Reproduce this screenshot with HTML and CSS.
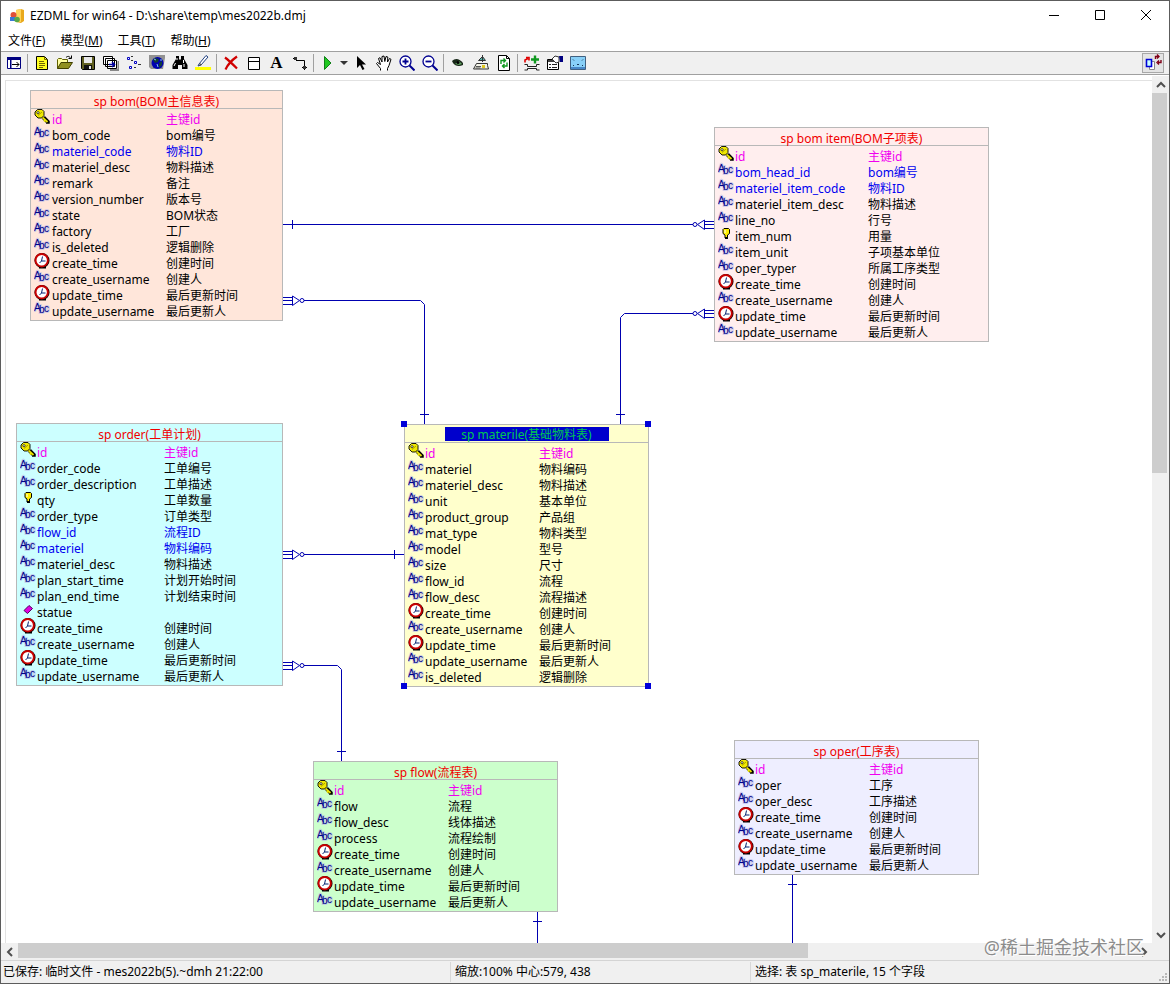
FILE: index.html
```html
<!DOCTYPE html>
<html lang="zh-CN">
<head>
<meta charset="utf-8">
<title>EZDML for win64</title>
<link rel="stylesheet" href="styles.css">
</head>
<body>
<svg class="defs" aria-hidden="true">
  <symbol id="key" viewBox="0 0 16 16">
    <path d="M8.500 8.500L13 13M10 8l4.500 4.500v1h-2.500" stroke="#000" stroke-width="2.500" fill="none"/>
    <path d="M8 8l5.500 5M11 11.500l-1 1" stroke="#e8e000" stroke-width="1.800" fill="none"/>
    <path d="M3.500 .5h4.500l2 2v4l-2.500 2.500H4L1 6V3z" fill="#f0e800" stroke="#000" stroke-width=".9"/>
    <path d="M4 6.500l4-3.500" stroke="#a09800" stroke-width=".9"/>
    <circle cx="4" cy="3.700" r="1.100" fill="#fff" stroke="#000" stroke-width=".7"/>
  </symbol>
  <symbol id="abc" viewBox="0 0 16 16" overflow="visible">
    <g class="abc-halo"><text x="0" y="10">A</text><text x="5" y="12">b</text><text x="10" y="11">c</text></g>
    <g class="abc-ink"><text x="0" y="10">A</text><text x="5" y="12">b</text><text x="10" y="11">c</text></g>
  </symbol>
  <symbol id="clock" viewBox="0 0 16 16">
    <path d="M5 14.500h7" stroke="#000" stroke-width="2"/>
    <circle cx="8" cy="7.500" r="6.800" fill="#fff" stroke="#000" stroke-width="1.500"/>
    <circle cx="7.700" cy="7.200" r="6.200" fill="#fff" stroke="#c80000" stroke-width="2"/>
    <path d="M8.500 3.500L7.500 8h4M7.500 8l-2 2" stroke="#002070" fill="none"/>
  </symbol>
  <symbol id="bulb" viewBox="0 0 16 16">
    <path d="M6 2.500h4.500l1 1v4l-2 1.500v3h-2.500v-3L5 7.500v-4z" fill="#ffee00" stroke="#000"/>
    <path d="M7 4v3" stroke="#fff"/><path d="M7 12h3" stroke="#000" stroke-width="2"/>
  </symbol>
  <symbol id="diamond" viewBox="0 0 16 16">
    <path d="M9 3.500l3.500 3-5 5-3.500-3z" fill="#e000e0" stroke="#500060"/>
  </symbol>
  <symbol id="foot" viewBox="0 0 22 10" overflow="visible">
    <path d="M0 1.500h9M0 4.500h9M0 8.500h9M9.500 0v9.500l7-5zM21 4.500h1"/><circle cx="19" cy="4.500" r="2"/>
  </symbol>
</svg>

<div class="window">
  <header class="titlebar">
    <svg class="app-icon" viewBox="0 0 16 16" aria-hidden="true"><path d="M7 2l5-1 3 1v11l-3 2-5-1z" fill="#e9a91c"/><path d="M7 2l5-1v13l-5-1z" fill="#ffd55c"/><circle cx="4.500" cy="7" r="3" fill="#e05038"/><rect x="1" y="9" width="5" height="4" fill="#3a78d8"/><circle cx="8" cy="11.500" r="2.800" fill="#58a848"/></svg>
    <h1 class="caption">EZDML for win64 - D:\share\temp\mes2022b.dmj</h1>
    <button class="win-btn" aria-label="最小化"><svg viewBox="0 0 12 12"><path d="M1 5.500h10"/></svg></button>
    <button class="win-btn" aria-label="最大化"><svg viewBox="0 0 12 12"><path d="M1.500 .5h9v9h-9z"/></svg></button>
    <button class="win-btn" aria-label="关闭"><svg viewBox="0 0 12 12"><path d="M1 0l10 10M11 0L1 10"/></svg></button>
  </header>

  <nav class="menubar">
    <button>文件(<u>F</u>)</button><button>模型(<u>M</u>)</button><button>工具(<u>T</u>)</button><button>帮助(<u>H</u>)</button>
  </nav>

  <div class="toolbar" role="toolbar">
    <button class="tool" aria-label="侧栏"><svg viewBox="0 0 16 16"><path d="M1.500 2.500h13v11h-13z" fill="#fff" stroke="#000080"/><path d="M1 2h14v3H1zM4 5h1.500v9H4z" fill="#000080"/><path d="M6 9.500h7M10.500 7l2.500 2.500L10.500 12" stroke="#000" fill="none"/></svg></button>
    <span class="sep"></span>
    <button class="tool" aria-label="新建"><svg viewBox="0 0 16 16"><path d="M2.500 1.500h8l3 3v10h-11z" fill="#ffff20" stroke="#000"/><path d="M10.500 1.500v3h3M5 6.500h5M5 8.500h6M5 10.500h6M5 12.500h4" stroke="#706800" fill="none"/></svg></button>
    <button class="tool" aria-label="打开"><svg viewBox="0 0 16 16"><path d="M.5 13.500v-9l1-1h3l1 1h5v3" fill="#ffffa0" stroke="#606000"/><path d="M.5 13.500l3.500-6h11.500l-4 6z" fill="#909020" stroke="#404000"/><path d="M9 2.500c2-2 4-1 4.500 1M11.500 3.500h3v-3" stroke="#000" fill="none"/></svg></button>
    <button class="tool" aria-label="保存"><svg viewBox="0 0 16 16"><path d="M1.500 1.500h13v13h-12l-1-1z" fill="#606020" stroke="#000"/><path d="M4 2h8v6H4z" fill="#e8e8e8"/><path d="M4 10h8v4H4z" fill="#111"/><path d="M9 11h2v3H9z" fill="#e8e8e8"/></svg></button>
    <button class="tool" aria-label="全部复制"><svg viewBox="0 0 16 16"><path d="M7 15h8.500V6" stroke="#888" stroke-width="2" fill="none"/><path d="M.5 1.500h9v8h-9zM2.500 3.500h9v8h-9zM4.500 5.500h9v8h-9z" fill="#fff" stroke="#000"/><path d="M6 9.500h6M9 7l2.500 2.500L9 12" stroke="#0000a0" stroke-width="1.500" fill="none"/></svg></button>
    <button class="tool" aria-label="关系"><svg viewBox="0 0 16 16"><path d="M1.500 2.500h2v2h-2zM8.500 6.500h2v2h-2zM3.500 11.500h2v2h-2z" fill="#fff" stroke="#0000c0"/><path d="M5 1.500h2M12 9.500h3M8 12.500h2M5 5.500h2" stroke="#333"/></svg></button>
    <button class="tool" aria-label="全局"><svg viewBox="0 0 16 16"><path d="M0 0h16v3l-2 11H2L0 12z" fill="#929292"/><circle cx="8.500" cy="8" r="6" fill="#0000b0"/><path d="M6 3l4 1-1 3-3 1-2-3zM10 8l3-2v4l-3 3z" fill="#103c38"/><path d="M5 4l2 1M11 5h2M8 9l1 3" stroke="#80c8e0"/></svg></button>
    <button class="tool" aria-label="查找"><svg viewBox="0 0 16 16"><path d="M4 1h3v3l1 1 1-1V1h3v3l3.500 6v4H10v-4H6v4H.5v-4L4 4z" fill="#000"/><path d="M3.500 8L2 11M11.500 5v3M5 3v2M12 9v3" stroke="#fff"/></svg></button>
    <button class="tool" aria-label="高亮"><svg viewBox="0 0 16 16"><path d="M0 12h16v3H0z" fill="#ffff00"/><path d="M4 9l7-8.500 2 1.500-7 8-3 1z" fill="#fff" stroke="#204080"/><path d="M4 11l1-3 2 2z" fill="#555"/></svg></button>
    <span class="sep"></span>
    <button class="tool" aria-label="删除"><svg viewBox="0 0 16 16"><path d="M2 2.500c4 3 8 7 12 11M14 1.500C9 5 5 9 2.500 14.500" stroke="#d00000" stroke-width="2.200" fill="none"/></svg></button>
    <button class="tool" aria-label="表"><svg viewBox="0 0 16 16"><path d="M2.500 2.500h11v12h-11zM2.500 6.500h11" fill="#fff" stroke="#000"/></svg></button>
    <button class="tool tool-text" aria-label="文本">A</button>
    <button class="tool" aria-label="连线"><svg viewBox="0 0 16 16"><path d="M1 3.500h3M4 5.500h8.500V12M10 12.500h5M12.500 15v-3" stroke="#000" fill="none"/><path d="M2 2h3v3H2zM11 11h3v3h-3z" fill="#333"/></svg></button>
    <span class="sep"></span>
    <button class="tool" aria-label="运行"><svg viewBox="0 0 16 16"><path d="M4.500 1.500l6.500 6.500-6.500 6.500z" fill="#20c820" stroke="#108018"/></svg></button>
    <button class="tool tool-drop" aria-label="运行选项"><svg viewBox="0 0 8 16"><path d="M0 6h8l-4 4z" fill="#333"/></svg></button>
    <button class="tool" aria-label="选择"><svg viewBox="0 0 16 16"><path d="M4 1v12l3-3 2.500 5 2-1L9 9.500h4z" fill="#000"/></svg></button>
    <button class="tool" aria-label="移动"><svg viewBox="0 0 16 16"><path d="M4.500 15.500v-2L.5 8.500l1-1 3 2-2-6 1.500-.8 2 4.300V1.500l2-.5.8 5.500L10 1.500l1.800.5-.3 5 2-3.500 1.500.8-2 6.200-1.500 3v2" fill="#fff" stroke="#000"/></svg></button>
    <button class="tool" aria-label="放大"><svg viewBox="0 0 16 16"><circle cx="6.500" cy="6.500" r="5.500" fill="#fff" stroke="#000090" stroke-width="1.300"/><path d="M10.500 10.500l5 5" stroke="#000090" stroke-width="2"/><path d="M3.500 6.500h6M6.500 3.500v6" stroke="#000090" stroke-width="1.800"/></svg></button>
    <button class="tool" aria-label="缩小"><svg viewBox="0 0 16 16"><circle cx="6.500" cy="6.500" r="5.500" fill="#fff" stroke="#000090" stroke-width="1.300"/><path d="M10.500 10.500l5 5" stroke="#000090" stroke-width="2"/><path d="M3.500 6.500h6" stroke="#000090" stroke-width="1.800"/></svg></button>
    <span class="sep"></span>
    <button class="tool" aria-label="预览"><svg viewBox="0 0 16 16"><path d="M2 6c3-3 7-3 11 2v2c-4 2-8 1-10-2z" fill="#182818"/><path d="M5 9l4-3 3 3-3 1z" fill="#60a060"/><circle cx="8" cy="7.500" r="1.500" fill="#000"/></svg></button>
    <button class="tool" aria-label="生成"><svg viewBox="0 0 16 16"><path d="M5.500 5.500l4-4 3 4z" fill="#50b0a8" stroke="#333"/><path d="M9.500 0v7" stroke="#333"/><path d="M3.500 8.500h11v2l1 3.500H.5z" fill="#f4f4e8" stroke="#333"/><path d="M3 11.500h5M2.500 13h5" stroke="#555"/><path d="M9 10h3v3H9z" fill="#e0c820"/></svg></button>
    <button class="tool" aria-label="刷新"><svg viewBox="0 0 16 16"><path d="M2.500.5h8l3 3v12h-11z" fill="#fff" stroke="#000"/><path d="M10.500.5v3h3" fill="none" stroke="#000"/><path d="M5 9V5.500h4M7.500 3.500l2 2-2 2M11 7.500V11H7M8.500 9l-2 2 2 2" stroke="#109820" stroke-width="1.400" fill="none"/></svg></button>
    <span class="sep"></span>
    <button class="tool" aria-label="设置"><svg viewBox="0 0 16 16"><path d="M1 7.500V5l3-1.500M2 2.500h3v3" stroke="#e00000" stroke-width="1.600" fill="none"/><path d="M7 4.500h8M11 .5v8" stroke="#109820" stroke-width="2.400"/><path d="M.5 9.500h3v2h9v-2h3M.5 15h3v-1.500h9V15h3" stroke="#222" fill="none"/></svg></button>
    <button class="tool" aria-label="属性"><svg viewBox="0 0 16 16"><path d="M.5 4.500h11v10H.5z" fill="#fff" stroke="#000"/><path d="M1 6h8" stroke="#000" stroke-width="1.500"/><path d="M2 9.500h2M5 9.500h5M2 12.500h2M5 12.500h5" stroke="#222"/><path d="M5 4l3-3 4 1v5l-3 1z" fill="#fff" stroke="#333"/><path d="M12 1h4v6h-3z" fill="#000080"/></svg></button>
    <button class="tool" aria-label="全屏"><svg viewBox="0 0 16 16"><path d="M.5 1.500h15v13H.5z" fill="#88d0f8" stroke="#406080"/><path d="M1 13h14" stroke="#4888c8" stroke-width="2"/><path d="M3 4.500l1 1M13 4.500l-1 1M3 11l1-1M13 11l-1-1M7 9l1 1 1-1" stroke="#183858" fill="none"/></svg></button>
    <button class="tool tool-toggle" aria-label="切换视图"><svg viewBox="0 0 18 18"><path d="M5.500 7.500h5v8h-5z" fill="#fff" stroke="#888"/><path d="M2.500 5.500h5v7h-5z" fill="#c8ffff" stroke="#0000d8" stroke-width="1.600"/><path d="M11.500 5V2.500h3M13 .500l2 2-2 2M17 6v2.500h-3M15 6.500l-2 2 2 2" stroke="#800018" stroke-width="1.400" fill="none"/></svg></button>
  </div>

  <main class="workspace">
    <div class="view">
      <div class="sheet">
        <svg class="links" aria-hidden="true">
          <g transform="translate(-6 -81)">
            <path d="M283 224.500H692M292.500 220v9"/>
            <path d="M304 300.500H420.500l4 4V424M420 414.500h9"/>
            <path d="M693 313.500H624.500l-4 4V424M616 414.500h9"/>
            <path d="M304 554.500H404M394.500 550v9"/>
            <path d="M304 665.500H337.500l4 4V762M337 751.500h9"/>
            <path d="M537.500 912V943M533 921.500h9"/>
            <path d="M792.500 875V943M788 884.500h9"/>
            <use href="#foot" x="283" y="296" width="22" height="10"/>
            <use href="#foot" x="283" y="550" width="22" height="10"/>
            <use href="#foot" x="283" y="661" width="22" height="10"/>
            <g transform="translate(714 220) scale(-1 1)"><use href="#foot" width="22" height="10"/></g>
            <g transform="translate(714 309) scale(-1 1)"><use href="#foot" width="22" height="10"/></g>
          </g>
        </svg>

        <table class="node bom">
          <caption>sp bom(BOM主信息表)</caption>
          <tr class="pk"><td><svg><use href="#key"/></svg></td><td>id</td><td>主键id</td></tr>
          <tr><td><svg><use href="#abc"/></svg></td><td>bom_code</td><td>bom编号</td></tr>
          <tr class="fk"><td><svg><use href="#abc"/></svg></td><td>materiel_code</td><td>物料ID</td></tr>
          <tr><td><svg><use href="#abc"/></svg></td><td>materiel_desc</td><td>物料描述</td></tr>
          <tr><td><svg><use href="#abc"/></svg></td><td>remark</td><td>备注</td></tr>
          <tr><td><svg><use href="#abc"/></svg></td><td>version_number</td><td>版本号</td></tr>
          <tr><td><svg><use href="#abc"/></svg></td><td>state</td><td>BOM状态</td></tr>
          <tr><td><svg><use href="#abc"/></svg></td><td>factory</td><td>工厂</td></tr>
          <tr><td><svg><use href="#abc"/></svg></td><td>is_deleted</td><td>逻辑删除</td></tr>
          <tr><td><svg><use href="#clock"/></svg></td><td>create_time</td><td>创建时间</td></tr>
          <tr><td><svg><use href="#abc"/></svg></td><td>create_username</td><td>创建人</td></tr>
          <tr><td><svg><use href="#clock"/></svg></td><td>update_time</td><td>最后更新时间</td></tr>
          <tr><td><svg><use href="#abc"/></svg></td><td>update_username</td><td>最后更新人</td></tr>
        </table>

        <table class="node bom-item">
          <caption>sp bom item(BOM子项表)</caption>
          <tr class="pk"><td><svg><use href="#key"/></svg></td><td>id</td><td>主键id</td></tr>
          <tr class="fk"><td><svg><use href="#abc"/></svg></td><td>bom_head_id</td><td>bom编号</td></tr>
          <tr class="fk"><td><svg><use href="#abc"/></svg></td><td>materiel_item_code</td><td>物料ID</td></tr>
          <tr><td><svg><use href="#abc"/></svg></td><td>materiel_item_desc</td><td>物料描述</td></tr>
          <tr><td><svg><use href="#abc"/></svg></td><td>line_no</td><td>行号</td></tr>
          <tr><td><svg><use href="#bulb"/></svg></td><td>item_num</td><td>用量</td></tr>
          <tr><td><svg><use href="#abc"/></svg></td><td>item_unit</td><td>子项基本单位</td></tr>
          <tr><td><svg><use href="#abc"/></svg></td><td>oper_typer</td><td>所属工序类型</td></tr>
          <tr><td><svg><use href="#clock"/></svg></td><td>create_time</td><td>创建时间</td></tr>
          <tr><td><svg><use href="#abc"/></svg></td><td>create_username</td><td>创建人</td></tr>
          <tr><td><svg><use href="#clock"/></svg></td><td>update_time</td><td>最后更新时间</td></tr>
          <tr><td><svg><use href="#abc"/></svg></td><td>update_username</td><td>最后更新人</td></tr>
        </table>

        <table class="node order">
          <caption>sp order(工单计划)</caption>
          <tr class="pk"><td><svg><use href="#key"/></svg></td><td>id</td><td>主键id</td></tr>
          <tr><td><svg><use href="#abc"/></svg></td><td>order_code</td><td>工单编号</td></tr>
          <tr><td><svg><use href="#abc"/></svg></td><td>order_description</td><td>工单描述</td></tr>
          <tr><td><svg><use href="#bulb"/></svg></td><td>qty</td><td>工单数量</td></tr>
          <tr><td><svg><use href="#abc"/></svg></td><td>order_type</td><td>订单类型</td></tr>
          <tr class="fk"><td><svg><use href="#abc"/></svg></td><td>flow_id</td><td>流程ID</td></tr>
          <tr class="fk"><td><svg><use href="#abc"/></svg></td><td>materiel</td><td>物料编码</td></tr>
          <tr><td><svg><use href="#abc"/></svg></td><td>materiel_desc</td><td>物料描述</td></tr>
          <tr><td><svg><use href="#abc"/></svg></td><td>plan_start_time</td><td>计划开始时间</td></tr>
          <tr><td><svg><use href="#abc"/></svg></td><td>plan_end_time</td><td>计划结束时间</td></tr>
          <tr><td><svg><use href="#diamond"/></svg></td><td>statue</td><td></td></tr>
          <tr><td><svg><use href="#clock"/></svg></td><td>create_time</td><td>创建时间</td></tr>
          <tr><td><svg><use href="#abc"/></svg></td><td>create_username</td><td>创建人</td></tr>
          <tr><td><svg><use href="#clock"/></svg></td><td>update_time</td><td>最后更新时间</td></tr>
          <tr><td><svg><use href="#abc"/></svg></td><td>update_username</td><td>最后更新人</td></tr>
        </table>

        <table class="node materile">
          <caption><span class="picked">sp materile(基础物料表)</span><i class="grip tl"></i><i class="grip tr"></i><i class="grip bl"></i><i class="grip br"></i></caption>
          <tr class="pk"><td><svg><use href="#key"/></svg></td><td>id</td><td>主键id</td></tr>
          <tr><td><svg><use href="#abc"/></svg></td><td>materiel</td><td>物料编码</td></tr>
          <tr><td><svg><use href="#abc"/></svg></td><td>materiel_desc</td><td>物料描述</td></tr>
          <tr><td><svg><use href="#abc"/></svg></td><td>unit</td><td>基本单位</td></tr>
          <tr><td><svg><use href="#abc"/></svg></td><td>product_group</td><td>产品组</td></tr>
          <tr><td><svg><use href="#abc"/></svg></td><td>mat_type</td><td>物料类型</td></tr>
          <tr><td><svg><use href="#abc"/></svg></td><td>model</td><td>型号</td></tr>
          <tr><td><svg><use href="#abc"/></svg></td><td>size</td><td>尺寸</td></tr>
          <tr><td><svg><use href="#abc"/></svg></td><td>flow_id</td><td>流程</td></tr>
          <tr><td><svg><use href="#abc"/></svg></td><td>flow_desc</td><td>流程描述</td></tr>
          <tr><td><svg><use href="#clock"/></svg></td><td>create_time</td><td>创建时间</td></tr>
          <tr><td><svg><use href="#abc"/></svg></td><td>create_username</td><td>创建人</td></tr>
          <tr><td><svg><use href="#clock"/></svg></td><td>update_time</td><td>最后更新时间</td></tr>
          <tr><td><svg><use href="#abc"/></svg></td><td>update_username</td><td>最后更新人</td></tr>
          <tr><td><svg><use href="#abc"/></svg></td><td>is_deleted</td><td>逻辑删除</td></tr>
        </table>

        <table class="node flow">
          <caption>sp flow(流程表)</caption>
          <tr class="pk"><td><svg><use href="#key"/></svg></td><td>id</td><td>主键id</td></tr>
          <tr><td><svg><use href="#abc"/></svg></td><td>flow</td><td>流程</td></tr>
          <tr><td><svg><use href="#abc"/></svg></td><td>flow_desc</td><td>线体描述</td></tr>
          <tr><td><svg><use href="#abc"/></svg></td><td>process</td><td>流程绘制</td></tr>
          <tr><td><svg><use href="#clock"/></svg></td><td>create_time</td><td>创建时间</td></tr>
          <tr><td><svg><use href="#abc"/></svg></td><td>create_username</td><td>创建人</td></tr>
          <tr><td><svg><use href="#clock"/></svg></td><td>update_time</td><td>最后更新时间</td></tr>
          <tr><td><svg><use href="#abc"/></svg></td><td>update_username</td><td>最后更新人</td></tr>
        </table>

        <table class="node oper">
          <caption>sp oper(工序表)</caption>
          <tr class="pk"><td><svg><use href="#key"/></svg></td><td>id</td><td>主键id</td></tr>
          <tr><td><svg><use href="#abc"/></svg></td><td>oper</td><td>工序</td></tr>
          <tr><td><svg><use href="#abc"/></svg></td><td>oper_desc</td><td>工序描述</td></tr>
          <tr><td><svg><use href="#clock"/></svg></td><td>create_time</td><td>创建时间</td></tr>
          <tr><td><svg><use href="#abc"/></svg></td><td>create_username</td><td>创建人</td></tr>
          <tr><td><svg><use href="#clock"/></svg></td><td>update_time</td><td>最后更新时间</td></tr>
          <tr><td><svg><use href="#abc"/></svg></td><td>update_username</td><td>最后更新人</td></tr>
        </table>
      </div>
    </div>
    <div class="scroll scroll-v">
      <button aria-label="向上"><svg viewBox="0 0 10 10"><path d="M1 7l4-4 4 4"/></svg></button>
      <div class="track"><div class="thumb"></div></div>
      <button aria-label="向下"><svg viewBox="0 0 10 10"><path d="M1 3l4 4 4-4"/></svg></button>
    </div>
    <div class="scroll scroll-h">
      <button aria-label="向左"><svg viewBox="0 0 10 10"><path d="M7 1L3 5l4 4"/></svg></button>
      <div class="track"><div class="thumb"></div></div>
      <button aria-label="向右"><svg viewBox="0 0 10 10"><path d="M3 1l4 4-4 4"/></svg></button>
    </div>
    <div class="corner"></div>
    <div class="watermark">@稀土掘金技术社区</div>
  </main>

  <footer class="status">
    <span>已保存: 临时文件 - mes2022b(5).~dmh 21:22:00</span>
    <span>缩放:100% 中心:579, 438</span>
    <span>选择: 表 sp_materile, 15 个字段</span>
    <svg class="size-grip" viewBox="0 0 10 10" aria-hidden="true"><path d="M7 0h2v2H7zM7 3h2v2H7zM4 3h2v2H4zM7 6h2v2H7zM4 6h2v2H4zM1 6h2v2H1z" fill="#b8b8b8"/></svg>
  </footer>
</div>
</body>
</html>
```
FILE: styles.css
```css
* { box-sizing: border-box; }

body {
  margin: 0;
  font: 12px/16px "Noto Sans", "Noto Sans CJK SC", sans-serif;
  color: #000;
  background: #fff;
}

button {
  font: inherit;
  color: inherit;
  padding: 0;
  border: 0;
  background: none;
}

.defs { position: absolute; width: 20px; height: 20px; overflow: visible; pointer-events: none; }

.window {
  display: flex;
  flex-direction: column;
  height: 100vh;
  border: 1px solid #5c5c5c;
}

/* Title bar and menu */
.titlebar { display: flex; align-items: center; height: 29px; padding-left: 8px; }
.app-icon { width: 16px; height: 16px; }
.caption { flex: 1; margin: 0 0 0 5px; font-size: 12px; font-weight: 400; }
.win-btn { display: grid; place-items: center; width: 46px; height: 29px; }
.win-btn svg { width: 12px; height: 12px; fill: none; stroke: #000; }

.menubar { display: flex; align-items: center; gap: 15px; height: 21px; padding-left: 7px; }
.menubar u { text-underline-offset: 1px; }

/* Toolbar */
.toolbar {
  display: flex;
  align-items: center;
  height: 24px;
  margin-bottom: 1px;
  padding: 0 5px 0 1px;
  background: #f0f0f0;
  border-top: 1px solid #a0a0a0;
  border-bottom: 1px solid #a0a0a0;
}
.tool { display: grid; place-items: center; width: 23px; height: 22px; }
.tool svg { width: 16px; height: 16px; }
.tool-drop { width: 10px; }
.tool-drop svg { width: 8px; }
.tool-text { font: bold 17px/22px "Liberation Serif", serif; }
.tool-toggle { width: 22px; height: 20px; margin-left: auto; border: 1px solid #a8a8a8; background: #e4e4e4; }
.tool-toggle svg { width: 18px; height: 18px; }
.sep { width: 1px; height: 18px; margin: 0 2px; background: #a0a0a0; }

/* Diagram area */
.workspace {
  position: relative;
  flex: 1;
  min-height: 0;
  display: grid;
  grid-template: minmax(0, 1fr) 17px / minmax(0, 1fr) 17px;
}
.view { display: flex; padding: 4px 0 0 4px; overflow: hidden; }
.sheet {
  position: relative;
  flex: 1;
  overflow: hidden;
  border-top: 1px solid #e2e2e2;
  border-left: 1px solid #e2e2e2;
}
.links { position: absolute; width: 100%; height: 100%; fill: none; stroke: #0000b0; }

.node {
  --icon: 20px;
  position: absolute;
  display: block;
  padding: 0 0 1px;
  border: 1px solid #b8b8b8;
  border-spacing: 0;
  white-space: nowrap;
}
.node caption {
  display: block;
  height: 18px;
  margin-bottom: 2px;
  padding-top: 2px;
  border-bottom: 1px solid #b8b8b8;
  line-height: 18px;
  color: #f00000;
}
.node tbody { display: block; }
.node tr { display: grid; grid-template-columns: var(--icon) var(--name) auto; height: 16px; }
.node td { padding: 0; line-height: 18px; }
.node td svg { display: block; width: 16px; height: 16px; margin: -2px 0 0 3px; }
.pk { color: #f000f0; }
.fk { color: #0000f0; }

.bom { left: 24px; top: 9px; width: 253px; background: #ffe6da; --icon: 21px; --name: 114px; }
.bom-item { left: 708px; top: 46px; width: 275px; background: #ffeeee; --name: 133px; }
.order { left: 10px; top: 342px; width: 267px; background: #ccffff; --name: 127px; }
.materile { left: 398px; top: 343px; width: 245px; background: #ffffcc; --name: 114px; }
.flow { left: 307px; top: 680px; width: 245px; background: #ccffcc; --name: 114px; }
.oper { left: 728px; top: 659px; width: 245px; background: #eeeeff; --name: 114px; }

.picked { display: block; width: 164px; height: 14px; margin: 0 auto; line-height: 16px; background: #0000cc; color: #00c850; }
.grip { position: absolute; width: 6px; height: 6px; background: #0000d8; }
.tl { left: -4px; top: -4px; }
.tr { right: -3px; top: -4px; }
.bl { left: -4px; bottom: -3px; }
.br { right: -3px; bottom: -3px; }

.abc-halo, .abc-ink { font: 10px/10px "Liberation Sans", sans-serif; }
.abc-halo { fill: #b8b8e8; stroke: #b8b8e8; stroke-width: 2px; opacity: .6; }
.abc-ink { fill: #000088; stroke: none; }

/* Scroll bars */
.scroll { display: flex; background: #f0f0f0; }
.scroll-v { flex-direction: column; }
.scroll button { display: grid; place-items: center; width: 17px; height: 17px; }
.scroll svg { width: 10px; height: 10px; fill: none; stroke: #505050; stroke-width: 2px; }
.track { flex: 1; }
.thumb { background: #cdcdcd; }
.scroll-v .thumb { width: 15px; height: 45.6%; }
.scroll-h .thumb { width: 70.7%; height: 15px; }
.corner { background: #f0f0f0; }

.watermark {
  position: absolute;
  right: 25px;
  bottom: 1px;
  font-size: 18px;
  line-height: 24px;
  color: #8c8c8c;
  text-shadow: 0 0 2px #fff, 1px 1px 0 #fff;
}

/* Status bar */
.status {
  position: relative;
  display: grid;
  grid-template-columns: 449px 300px 1fr;
  align-items: center;
  height: 23px;
  background: #f0f0f0;
  border-top: 1px solid #d4d4d4;
}
.status span { padding-left: 4px; border-left: 1px solid #d8d8d8; line-height: 20px; }
.status span:first-child { padding-left: 2px; border-left: 0; }
.size-grip { position: absolute; right: 1px; bottom: 0; width: 10px; height: 10px; }
```
